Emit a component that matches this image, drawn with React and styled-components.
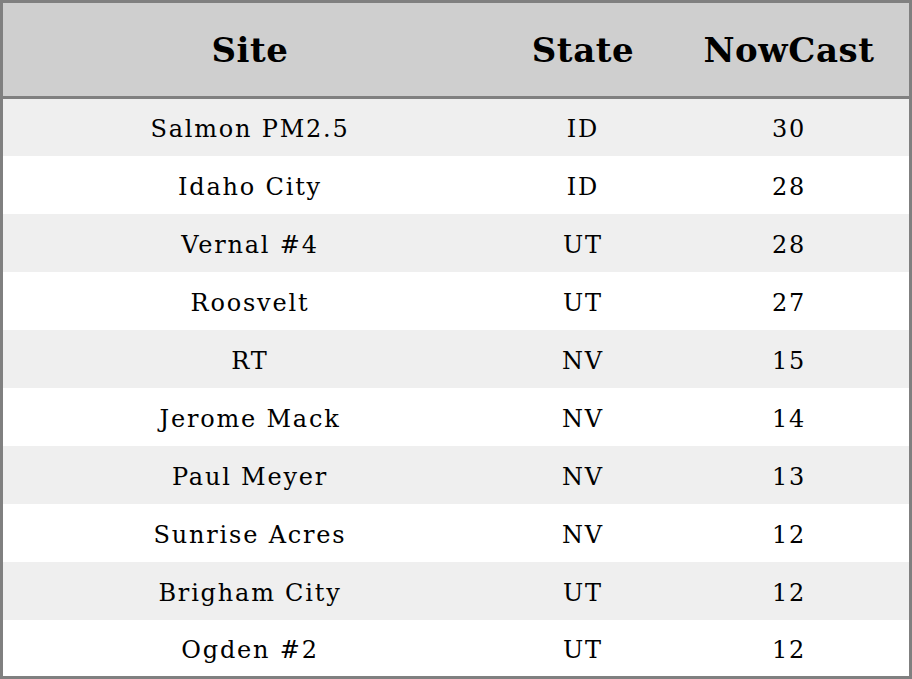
import styled, { createGlobalStyle } from "styled-components";

const GlobalStyle = createGlobalStyle`
  html, body {
    margin: 0;
    padding: 0;
    background: #fff;
  }
`;

const StyledTable = styled.table`
  width: 912px;
  height: 679px;
  border-collapse: collapse;
  border: 3px solid #808080;
  font-family: "DejaVu Serif", serif;
  color: #000;
  table-layout: fixed;
`;

const HeaderRow = styled.tr`
  height: 96px;
  background-color: #cfcfcf;
  border-bottom: 3px solid #808080;
`;

const HeaderCell = styled.th`
  font-size: 34px;
  font-weight: 700;
  letter-spacing: 0.6px;
  text-align: center;
  padding: 0;
  width: ${(props) => props.$width}px;
`;

const BodyRow = styled.tr`
  height: 57.7px;
  background-color: ${(props) => (props.$striped ? "#efefef" : "#fff")};
`;

const BodyCell = styled.td`
  font-size: 24px;
  letter-spacing: 1.8px;
  text-align: center;
  padding: 4px 0 0;
`;

const rows = [
  { site: "Salmon PM2.5", state: "ID", nowcast: 30 },
  { site: "Idaho City", state: "ID", nowcast: 28 },
  { site: "Vernal #4", state: "UT", nowcast: 28 },
  { site: "Roosvelt", state: "UT", nowcast: 27 },
  { site: "RT", state: "NV", nowcast: 15 },
  { site: "Jerome Mack", state: "NV", nowcast: 14 },
  { site: "Paul Meyer", state: "NV", nowcast: 13 },
  { site: "Sunrise Acres", state: "NV", nowcast: 12 },
  { site: "Brigham City", state: "UT", nowcast: 12 },
  { site: "Ogden #2", state: "UT", nowcast: 12 },
];

const App = () => {
  return (
    <>
      <GlobalStyle />
      <StyledTable>
        <thead>
          <HeaderRow>
            <HeaderCell $width={494}>Site</HeaderCell>
            <HeaderCell $width={172}>State</HeaderCell>
            <HeaderCell $width={240}>NowCast</HeaderCell>
          </HeaderRow>
        </thead>
        <tbody>
          {rows.map((row, i) => (
            <BodyRow key={row.site} $striped={i % 2 === 0}>
              <BodyCell>{row.site}</BodyCell>
              <BodyCell>{row.state}</BodyCell>
              <BodyCell>{row.nowcast}</BodyCell>
            </BodyRow>
          ))}
        </tbody>
      </StyledTable>
    </>
  );
};

export default App;
